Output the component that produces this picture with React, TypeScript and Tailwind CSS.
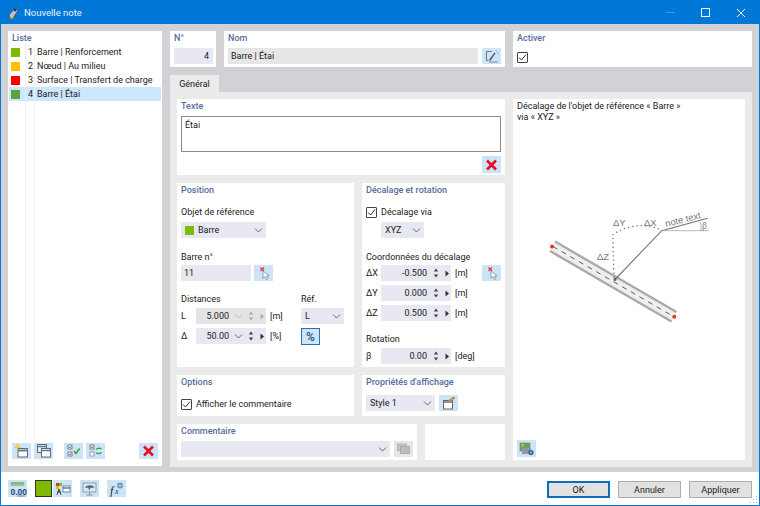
import React from "react";

const Sv = ({ children, w = 19, h = 16 }: { children: React.ReactNode; w?: number; h?: number }) => (
  <svg width={w} height={h} viewBox={`0 0 ${w} ${h}`} fill="none">{children}</svg>
);

const IconBtn = ({ children, gray, className = "" }: { children: React.ReactNode; gray?: boolean; className?: string }) => (
  <div className={`w-[19px] h-[16px] shrink-0 flex items-center justify-center ${gray ? "bg-[#e6e6e6]" : "bg-[#cce4f7]"} ${className}`}>{children}</div>
);

const XIcon = () => (
  <Sv><path d="M5 3.5l9 9M14 3.5l-9 9" stroke="#e81123" strokeWidth="2.6" /></Sv>
);
const CursorIcon = () => (
  <Sv>
    <path d="M6.5 2.5l3.5 3.5M10 2.5L6.5 6" stroke="#e03030" strokeWidth="1.2" />
    <path d="M9 6l0 7.5 2-2 1.5 3 1.5-.7-1.5-2.8 2.7-.2z" fill="#fff" stroke="#7f8a94" strokeWidth=".8" />
  </Sv>
);
const EditIcon = () => (
  <Sv>
    <path d="M4.5 3.5h5M4.5 3.5v9h2" stroke="#666" strokeWidth=".9" />
    <path d="M7 12l5.5-7.5 1 .8L8.3 13z" fill="#555" />
    <path d="M7 14h9" stroke="#777" strokeWidth=".8" />
    <path d="M14 3l.8.8M15.5 5.5h1" stroke="#666" strokeWidth=".8" />
  </Sv>
);
const NewIcon = () => (
  <Sv>
    <rect x="6" y="5.5" width="9.5" height="8.5" fill="#fff" stroke="#5f6b75" />
    <path d="M6 7.5h9.5" stroke="#5f7f9f" strokeWidth="2" />
    <path d="M5.5 1l.8 2.2L8.5 4l-2.2.8-.8 2.2-.8-2.2L2.5 4l2.2-.8z" fill="#f5dc20" stroke="#d8b400" strokeWidth=".4" />
  </Sv>
);
const CopyIcon = () => (
  <Sv>
    <rect x="3.5" y="1.5" width="9" height="8" fill="#e8eef4" stroke="#5f6b75" />
    <path d="M3.5 3.5h9" stroke="#5f7f9f" strokeWidth="1.6" />
    <rect x="7.5" y="5.5" width="9" height="8.5" fill="#fff" stroke="#5f6b75" />
    <path d="M7.5 7.5h9" stroke="#5f7f9f" strokeWidth="1.6" />
  </Sv>
);
const CheckAllIcon = () => (
  <Sv>
    <rect x="4" y="2" width="4" height="4" fill="#fff" stroke="#666" strokeWidth=".8" />
    <rect x="4" y="9" width="4" height="4" fill="#fff" stroke="#666" strokeWidth=".8" />
    <path d="M4.8 4l1 1 1.4-2M4.8 11l1 1 1.4-2" stroke="#333" strokeWidth=".7" />
    <path d="M10 8l2 2.5 3.5-5" stroke="#2aa13c" strokeWidth="1.4" />
  </Sv>
);
const CheckSwapIcon = () => (
  <Sv>
    <rect x="4" y="2" width="4" height="4" fill="#fff" stroke="#666" strokeWidth=".8" />
    <rect x="4" y="9" width="4" height="4" fill="#fff" stroke="#888" strokeWidth=".8" />
    <path d="M4.8 4l1 1 1.4-2" stroke="#333" strokeWidth=".7" />
    <path d="M10 6.5c2-1.8 4-1.5 5.5-.5M15.5 9.5c-2 1.5-4 1.3-5.5.3" stroke="#2aa13c" strokeWidth="1.3" />
  </Sv>
);
const UnitsIcon = () => (
  <Sv>
    <path d="M3 1.5h13v3H3z" fill="#9cc585" stroke="#7fa868" strokeWidth=".5" />
    <path d="M5 1.5v1.5M8 1.5v1.5M11 1.5v1.5M14 1.5v1.5" stroke="#507040" strokeWidth=".6" />
    <text x="2.5" y="13.5" fontSize="8.5" fontWeight="700" fill="#26456e" fontFamily="Liberation Sans, sans-serif">0.00</text>
    <path d="M9 15h8" stroke="#3a70c0" strokeWidth=".8" />
  </Sv>
);
const ColorsIcon = () => (
  <Sv>
    <rect x="3" y="2" width="3" height="3" fill="#e03030" />
    <rect x="6" y="2" width="3" height="3" fill="#8ab800" />
    <rect x="3" y="5" width="3" height="3" fill="#e8c000" />
    <path d="M6 8l-2 6M6 8l2 6M4 11h4" stroke="#333" strokeWidth=".9" />
    <rect x="10" y="5" width="7" height="6" fill="#fff" stroke="#5f6b75" strokeWidth=".8" />
    <path d="M10 7h7" stroke="#4a7ab0" strokeWidth="1.4" />
  </Sv>
);
const ScreenIcon = () => (
  <Sv>
    <rect x="3" y="2" width="13" height="9" fill="#dce6ee" stroke="#7f8c98" strokeWidth=".8" />
    <path d="M5 6.5c2-3 7-3 9.5-.5-1 1-3 1-4 .8L9.5 9.5 8 6.7C7 6.8 6 6.8 5 6.5z" fill="#486a94" />
    <path d="M9.5 11v2.5M6.5 14h6" stroke="#7f8c98" />
  </Sv>
);
const FxIcon = () => (
  <Sv>
    <text x="3" y="14" fontSize="12" fontStyle="italic" fontFamily="Liberation Serif, serif" fill="#222">f</text>
    <text x="8" y="13" fontSize="8" fontStyle="italic" fontFamily="Liberation Serif, serif" fill="#333">x</text>
    <circle cx="13" cy="4.5" r="3" fill="#6f8fb0" />
    <path d="M10 4.5h6M13 1.5v6" stroke="#dfe8f0" strokeWidth=".5" />
  </Sv>
);
const StyleIcon = () => (
  <Sv>
    <rect x="4.5" y="5.5" width="9" height="8.5" fill="#fff" stroke="#666" />
    <path d="M4.5 7h9" stroke="#777" strokeWidth="1.6" />
    <path d="M9 5l5-3 2 1.5-5 3z" fill="#d09a60" />
    <path d="M13 3h3" stroke="#a06030" />
  </Sv>
);
const CommentIcon = () => (
  <Sv>
    <rect x="3.5" y="3" width="9" height="7" fill="#c4c4c4" stroke="#a8a8a8" strokeWidth=".7" />
    <rect x="6.5" y="5.5" width="9" height="7" fill="#bdbdbd" stroke="#a0a0a0" strokeWidth=".7" />
  </Sv>
);
const PictureIcon = () => (
  <Sv>
    <rect x="3" y="2" width="10" height="8" fill="#6fa060" stroke="#777" strokeWidth=".6" />
    <rect x="4" y="3" width="3" height="2.5" fill="#c8b030" />
    <rect x="5" y="7" width="9" height="6" fill="#8f9aa6" />
    <circle cx="14" cy="11.5" r="2.6" fill="#2d5f96" />
    <circle cx="14" cy="11.5" r=".9" fill="#cce4f7" />
  </Sv>
);

const Chevron = ({ color = "#666" }: { color?: string }) => (
  <svg width="9" height="5" viewBox="0 0 9 5" fill="none"><path d="M1 .5l3.5 3.5L8 .5" stroke={color} strokeWidth="1" /></svg>
);

const Spin = ({ dim }: { dim?: boolean }) => (
  <svg width="6" height="12" viewBox="0 0 6 12" className="shrink-0">
    <path d="M3 1.5L5.2 4.5H.8z" fill={dim ? "#aaa" : "#444"} />
    <path d="M3 10.5L5.2 7.5H.8z" fill={dim ? "#aaa" : "#444"} />
  </svg>
);

const Arrow = ({ dim }: { dim?: boolean }) => (
  <svg width="4" height="7" viewBox="0 0 4 7" className="shrink-0"><path d="M.5.5L4 3.5.5 6.5z" fill={dim ? "#aaa" : "#333"} /></svg>
);

const Check = () => (
  <div className="w-[11px] h-[11px] border border-[#444] bg-white flex items-center justify-center shrink-0 rounded-[1px]">
    <svg width="9" height="9" viewBox="0 0 9 9" fill="none"><path d="M1 4.5l2.5 2.5L8 1.5" stroke="#333" strokeWidth="1" /></svg>
  </div>
);

const Title = ({ children }: { children: React.ReactNode }) => (
  <div className="h-[14px] leading-[14px] text-[#566c9c] font-medium">{children}</div>
);

const Panel = ({ children, className = "" }: { children: React.ReactNode; className?: string }) => (
  <div className={`bg-white px-[4px] ${className}`}>{children}</div>
);

const Select = ({ children, className = "" }: { children: React.ReactNode; className?: string }) => (
  <div className={`h-[16px] bg-[#e8e8f2] flex items-center justify-between pl-[4px] pr-[3px] ${className}`}>
    <div className="flex items-center gap-[4px]">{children}</div>
    <Chevron />
  </div>
);

const Num = ({ value, unit, chevron, disabled }: { value: string; unit: string; chevron?: boolean; disabled?: boolean }) => (
  <div className="flex items-center gap-[4px]">
    <div className={`w-[70px] h-[16px] flex items-center ${disabled ? "bg-[#e4e4e4]" : "bg-[#e8e8f2]"}`}>
      <div className={`text-right ${chevron ? "w-[33px]" : "w-[46px]"}`}>{value}</div>
      {chevron && (
        <div className="w-[18px] flex justify-center">
          <Chevron color={disabled ? "#bbb" : "#666"} />
        </div>
      )}
      {!chevron && <div className="w-[5px]" />}
      <div className="flex items-center ml-[1px] gap-[6px]">
        <Spin dim={disabled} />
        <Arrow dim={disabled} />
      </div>
    </div>
    <span className="whitespace-nowrap">{unit}</span>
  </div>
);

const Row = ({ n, color, label, sel }: { n: number; color: string; label: string; sel?: boolean }) => (
  <div className={`h-[14px] flex items-center mx-[1px] leading-[15px] ${sel ? "bg-[#cce8ff]" : ""}`}>
    <div className="w-[16px] flex justify-start pl-[2px]">
      <div className="w-[9px] h-[9px]" style={{ backgroundColor: color }} />
    </div>
    <div className="w-[8px] text-right mr-[3px]">{n}</div>
    <div className="ml-[1px] whitespace-nowrap pt-[1px]">{label}</div>
  </div>
);

const Button = ({ children, primary }: { children: React.ReactNode; primary?: boolean }) => (
  <div className={`w-[63px] h-[17px] flex items-center justify-center bg-[#e1e1e1] ${primary ? "border-2 border-[#0f6cb8]" : "border border-[#adadad]"}`}>{children}</div>
);

const Diagram = () => (
  <svg width="232" height="130" viewBox="0 0 232 130" fill="none">
    <g transform="translate(-513 -199)">
      <path d="M555 241.5L676.5 312 671.5 321.5 550 251z" fill="#efefef" />
      <path d="M555 241.5L676.5 312" stroke="#aaa" strokeWidth="2.4" />
      <path d="M550 251L671.5 321.5" stroke="#aaa" strokeWidth="2.4" />
      <path d="M553 246.5L674 316.8" stroke="#555d6b" strokeWidth="1" strokeDasharray="5 5" />
      <circle cx="552" cy="246.5" r="2" fill="#d8400f" />
      <circle cx="674.3" cy="316.7" r="2" fill="#d8400f" />
      <path d="M615 279.5L661.7 230.7 707.7 218.3" stroke="#6e7384" strokeWidth="1.1" />
      <path d="M661.7 230.7H709" stroke="#a8a8a8" strokeWidth=".8" />
      <path d="M700 222c1.5 3 1.5 6 .5 9" stroke="#a0a0a0" strokeWidth=".8" />
      <path d="M614 278L612.7 235C624 226 645 222 661 230" stroke="#6e7384" strokeWidth="1.3" strokeDasharray="1.3 3" />
      <circle cx="615" cy="279.5" r="1.5" fill="#5a5f70" />
      <g fontFamily="'Liberation Sans', sans-serif" fontSize="9.5" fill="#777">
        <text x="613" y="226">ΔY</text>
        <text x="644" y="226">ΔX</text>
        <text x="597" y="260">ΔZ</text>
        <text x="666" y="227" transform="rotate(-14 666 227)">note text</text>
        <text x="702" y="229" fontFamily="'Liberation Serif', serif">β</text>
      </g>
    </g>
  </svg>
);

export default function App() {
  return (
    <div
      className="w-[760px] h-[506px] flex flex-col border border-[#0078d7] bg-white text-[9px] leading-[14px] text-[#1a1a1a] overflow-hidden"
      style={{ fontFamily: "Roboto, sans-serif" }}
    >
      {/* title bar */}
      <div className="h-[23px] shrink-0 bg-[#0078d7] flex items-center text-white pl-[6px]">
        <svg width="13" height="14" viewBox="0 0 13 14" fill="none">
          <path d="M2 9l6-7 3 2.5-5 8H3z" fill="#b8c4d6" stroke="#34405a" strokeWidth=".8" />
          <path d="M3 11l3 1" stroke="#e8b820" strokeWidth="2" />
          <circle cx="8" cy="4" r="1.5" fill="#34405a" />
        </svg>
        <div className="ml-[4px] text-[9.5px] text-[#e6f1fb]">Nouvelle note</div>
        <div className="ml-auto flex items-center">
          <div className="w-[35px] flex justify-center"><div className="w-[9px] h-[1px] bg-[#3f9be0]" /></div>
          <div className="w-[35px] flex justify-center"><div className="w-[9px] h-[9px] border border-white" /></div>
          <div className="w-[35px] flex justify-center">
            <svg width="10" height="10" viewBox="0 0 10 10"><path d="M1 1l8 8M9 1l-8 8" stroke="#fff" strokeWidth="1" /></svg>
          </div>
          <div className="w-[1px]" />
        </div>
      </div>

      {/* body */}
      <div className="h-[448px] shrink-0 bg-[#d1d1d6] pt-[7px] pb-[6px] px-[7px] flex gap-[8px]">
        {/* list */}
        <div className="w-[154px] bg-white flex flex-col relative">
          <div className="h-[14px] leading-[14px] px-[4px] text-[#566c9c] font-medium">Liste</div>
          <div className="flex-1 flex flex-col">
            <Row n={1} color="#7fba00" label="Barre | Renforcement" />
            <Row n={2} color="#ffc000" label="Nœud | Au milieu" />
            <Row n={3} color="#ff0000" label="Surface | Transfert de charge" />
            <Row n={4} color="#5ba33c" label="Barre | Étai" sel />
          </div>
          <div className="absolute top-[14px] bottom-[26px] left-[17px] w-[1px] bg-[#f0f0f0]" />
          <div className="absolute top-[14px] bottom-[26px] left-[26px] w-[1px] bg-[#f0f0f0]" />
          <div className="h-[20px] pl-[4px] pr-[4px] flex gap-[3px] mb-[3px] mt-[3px] items-start">
            <IconBtn><NewIcon /></IconBtn>
            <IconBtn><CopyIcon /></IconBtn>
            <div className="w-[5px]" />
            <IconBtn><CheckAllIcon /></IconBtn>
            <IconBtn><CheckSwapIcon /></IconBtn>
            <IconBtn className="ml-auto mr-[0px]"><XIcon /></IconBtn>
          </div>
        </div>

        {/* main */}
        <div className="w-[582px] flex flex-col">
          <div className="h-[36px] flex gap-[8px] shrink-0">
            <Panel className="w-[46px]">
              <Title>N°</Title>
              <div className="mt-[3px] h-[16px] w-[39px] bg-[#e8e8f2] text-right pr-[4px] leading-[17px]">4</div>
            </Panel>
            <Panel className="w-[281px]">
              <Title>Nom</Title>
              <div className="mt-[3px] flex gap-[4px]">
                <div className="w-[250px] h-[16px] bg-[#e6e6e6] pl-[3px] leading-[17px]">Barre | Étai</div>
                <IconBtn><EditIcon /></IconBtn>
              </div>
            </Panel>
            <Panel className="w-[239px]">
              <Title>Activer</Title>
              <div className="mt-[7px]"><Check /></div>
            </Panel>
          </div>

          <div className="mt-[8px] h-[17px] shrink-0">
            <div className="w-[49px] h-[17px] bg-[#ebebeb] flex items-center justify-center">Général</div>
          </div>

          <div className="flex-1 bg-[#ebebeb] p-[7px] flex gap-[8px]">
            <div className="w-[328px] flex flex-col gap-[8px]">
              <Panel className="h-[76px]">
                <Title>Texte</Title>
                <div className="mt-[3px] h-[36px] w-[320px] border border-[#8a8a8a] px-[3px] leading-[14px] pt-[1px]">Étai</div>
                <div className="mt-[4px] flex justify-end"><IconBtn className="h-[17px]"><XIcon /></IconBtn></div>
              </Panel>

              <div className="h-[184px] flex gap-[8px]">
                <Panel className="w-[177px]">
                  <Title>Position</Title>
                  <div className="mt-[8px] h-[14px]">Objet de référence</div>
                  <Select className="mt-[3px] w-[85px]">
                    <div className="w-[9px] h-[9px] bg-[#7fba00]" />
                    <span>Barre</span>
                  </Select>
                  <div className="mt-[12px] h-[14px]">Barre n°</div>
                  <div className="mt-[1px] flex gap-[3px]">
                    <div className="w-[70px] h-[16px] bg-[#e8e8f2] pl-[3px] leading-[16px]">11</div>
                    <IconBtn><CursorIcon /></IconBtn>
                  </div>
                  <div className="mt-[11px] flex h-[14px]">
                    <div className="w-[120px]">Distances</div>
                    <div>Réf.</div>
                  </div>
                  <div className="mt-[2px] flex items-center">
                    <div className="w-[15px]">L</div>
                    <div className="w-[105px]"><Num value="5.000" unit="[m]" chevron disabled /></div>
                    <Select className="w-[43px]"><span>L</span></Select>
                  </div>
                  <div className="mt-[4px] flex items-start">
                    <div className="w-[15px] leading-[16px]">Δ</div>
                    <div className="w-[105px]"><Num value="50.00" unit="[%]" chevron /></div>
                    <div className="w-[19px] h-[17px] bg-[#cce4f7] border border-[#2f6fa8] flex items-center justify-center text-[12px] text-[#2a4a78] font-medium">%</div>
                  </div>
                </Panel>

                <Panel className="w-[143px]">
                  <Title>Décalage et rotation</Title>
                  <div className="mt-[8px] h-[14px] flex items-center gap-[4px]"><Check /><span>Décalage via</span></div>
                  <Select className="mt-[3px] ml-[15px] w-[43px]"><span>XYZ</span></Select>
                  <div className="mt-[12px] h-[14px] whitespace-nowrap">Coordonnées du décalage</div>
                  <div className="mt-[1px] flex items-center">
                    <div className="w-[15px]">ΔX</div>
                    <div className="w-[101px]"><Num value="-0.500" unit="[m]" /></div>
                    <IconBtn><CursorIcon /></IconBtn>
                  </div>
                  <div className="mt-[4px] flex items-center">
                    <div className="w-[15px]">ΔY</div>
                    <Num value="0.000" unit="[m]" />
                  </div>
                  <div className="mt-[4px] flex items-center">
                    <div className="w-[15px]">ΔZ</div>
                    <Num value="0.500" unit="[m]" />
                  </div>
                  <div className="mt-[11px] h-[14px]">Rotation</div>
                  <div className="mt-[2px] flex items-center">
                    <div className="w-[15px]">β</div>
                    <Num value="0.00" unit="[deg]" />
                  </div>
                </Panel>
              </div>

              <div className="h-[41px] flex gap-[8px]">
                <Panel className="w-[177px]">
                  <Title>Options</Title>
                  <div className="mt-[8px] h-[14px] flex items-center gap-[4px]"><Check /><span>Afficher le commentaire</span></div>
                </Panel>
                <Panel className="w-[143px]">
                  <Title>Propriétés d'affichage</Title>
                  <div className="mt-[6px] flex gap-[4px]">
                    <Select className="w-[69px]"><span>Style 1</span></Select>
                    <IconBtn><StyleIcon /></IconBtn>
                  </div>
                </Panel>
              </div>

              <div className="h-[36px] flex gap-[8px]">
                <Panel className="w-[240px]">
                  <Title>Commentaire</Title>
                  <div className="mt-[3px] flex gap-[4px]">
                    <Select className="w-[209px]"><span /></Select>
                    <IconBtn gray><CommentIcon /></IconBtn>
                  </div>
                </Panel>
                <div className="w-[80px] bg-white" />
              </div>
            </div>

            <div className="w-[232px] bg-white flex flex-col px-[4px]">
              <div className="mt-[1px] leading-[11px] pt-[1px]">
                Décalage de l'objet de référence « Barre »
                <br />
                via « XYZ »
              </div>
              <div className="-mx-[4px] mt-[76px]"><Diagram /></div>
              <IconBtn className="mt-auto mb-[3px] h-[17px]"><PictureIcon /></IconBtn>
            </div>
          </div>
        </div>
      </div>

      {/* footer */}
      <div className="flex-1 flex items-start pt-[8px] pl-[7px] pr-[7px] relative">
        <IconBtn className="h-[17px]"><UnitsIcon /></IconBtn>
        <div className="ml-[8px] w-[17px] h-[17px] bg-[#7fba00] border border-[#333]" />
        <IconBtn className="ml-[1px] h-[17px]"><ColorsIcon /></IconBtn>
        <IconBtn className="ml-[8px] h-[17px]"><ScreenIcon /></IconBtn>
        <IconBtn className="ml-[8px] h-[17px]"><FxIcon /></IconBtn>
        <div className="ml-auto flex gap-[8px] mt-[1px]">
          <Button primary>OK</Button>
          <Button>Annuler</Button>
          <Button>Appliquer</Button>
        </div>
        <svg className="absolute right-[1px] bottom-[1px]" width="9" height="9" viewBox="0 0 9 9">
          <g fill="#b0b0b0">
            <rect x="7" y="1" width="1" height="1" /><rect x="4" y="4" width="1" height="1" /><rect x="7" y="4" width="1" height="1" />
            <rect x="1" y="7" width="1" height="1" /><rect x="4" y="7" width="1" height="1" /><rect x="7" y="7" width="1" height="1" />
          </g>
        </svg>
      </div>
    </div>
  );
}
